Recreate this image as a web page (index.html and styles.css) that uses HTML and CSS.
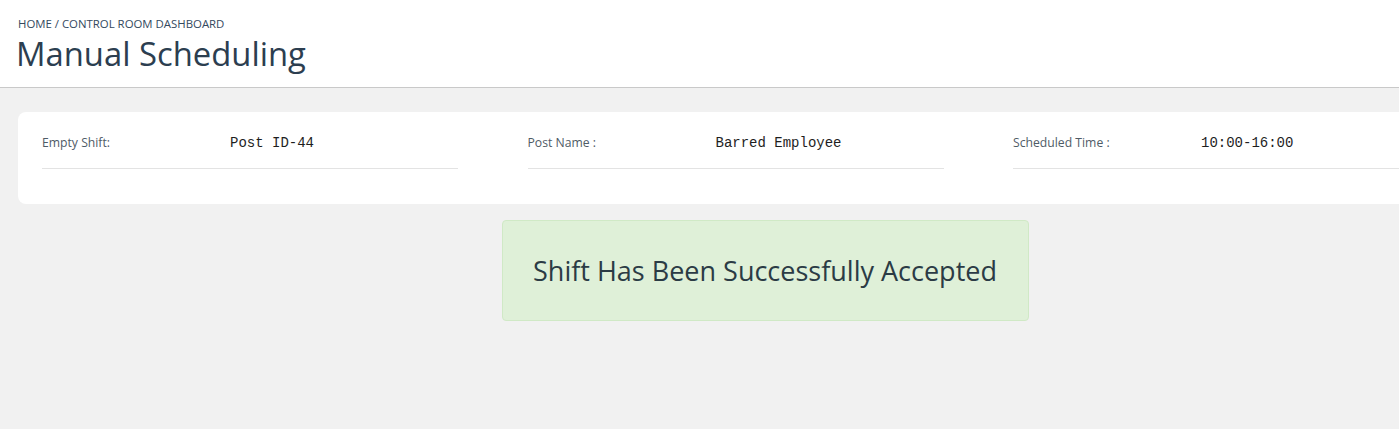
FILE: index.html
```html
<!DOCTYPE html>
<html>
<head>
<meta charset="utf-8">
<link rel="stylesheet" href="styles.css">
</head>
<body>
<header class="page-header">
  <div class="breadcrumb">HOME / CONTROL ROOM DASHBOARD</div>
  <h1 class="title">Manual Scheduling</h1>
</header>
<main class="content">
  <section class="card">
    <div class="field">
      <span class="label">Empty Shift:</span>
      <span class="value">Post ID-44</span>
    </div>
    <div class="field">
      <span class="label">Post Name :</span>
      <span class="value">Barred Employee</span>
    </div>
    <div class="field">
      <span class="label">Scheduled Time :</span>
      <span class="value">10:00-16:00</span>
    </div>
  </section>
  <div class="alert">Shift Has Been Successfully Accepted</div>
</main>
</body>
</html>
```
FILE: styles.css
```css
html, body {
  margin: 0;
  padding: 0;
}
body {
  background: #f1f1f1;
  font-family: "Open Sans", "Liberation Sans", sans-serif;
  overflow-x: hidden;
  min-height: 429px;
}
.page-header {
  background: #ffffff;
  border-bottom: 1px solid #c9c9c9;
  padding: 16px 0 0 16px;
  height: 71px;
}
.breadcrumb {
  font-size: 11.4px;
  line-height: 16px;
  color: #34495e;
  margin-left: 2px;
}
.title {
  margin: 0;
  font-weight: 400;
  font-size: 32.8px;
  line-height: 44px;
  color: #2c3e50;
}
.content {
  width: 1494px;
  margin-left: 18px;
  padding-top: 24px;
}
.card {
  background: #ffffff;
  border-radius: 8px;
  padding: 0 24px 35px 24px;
  display: grid;
  grid-template-columns: 416px 416px 416px;
  column-gap: 69.5px;
}
.field {
  display: flex;
  align-items: flex-start;
  height: 35px;
  padding-top: 21px;
  line-height: 20px;
  border-bottom: 1px solid #e3e3e3;
}
.label {
  width: 188px;
  font-size: 12.2px;
  color: #4f5b66;
}
.value {
  font-family: "Liberation Mono", "DejaVu Sans Mono", monospace;
  font-size: 14px;
  color: #1e1e1e;
}
.alert {
  width: 525px;
  height: 99px;
  margin: 16px auto 0 auto;
  background: #dff0d8;
  border: 1px solid #d0e9c6;
  border-radius: 4px;
  display: flex;
  align-items: center;
  justify-content: center;
  font-size: 27px;
  color: #2b3b45;
}
```
